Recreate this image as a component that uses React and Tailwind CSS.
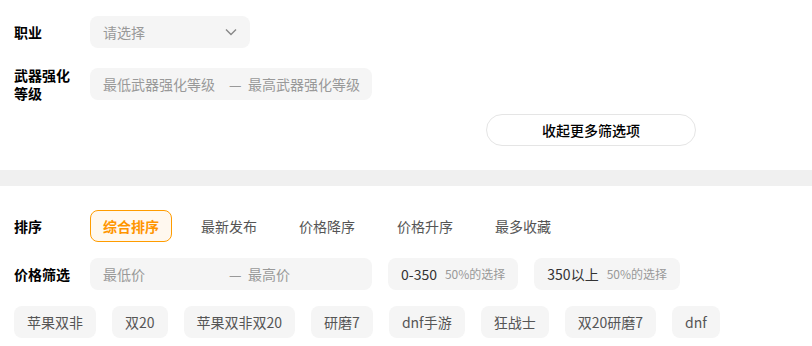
import React, { useState } from 'react';

const sortOptions = ['综合排序', '最新发布', '价格降序', '价格升序', '最多收藏'];
const priceChips = [
  { range: '0-350', hint: '50%的选择' },
  { range: '350以上', hint: '50%的选择' },
];
const tags = ['苹果双非', '双20', '苹果双非双20', '研磨7', 'dnf手游', '狂战士', '双20研磨7', 'dnf'];

const Label = ({ children }) => (
  <div className="w-[60px] mr-4 shrink-0 text-sm font-bold leading-[18px] text-black">{children}</div>
);

const RangeInput = ({ low, high }) => (
  <div className="flex h-8 w-[282px] items-center rounded-lg bg-[#f5f5f5] pl-[13px] text-sm text-[#999]">
    <span className="w-[126px]">{low}</span>
    <span className="w-[19px] text-[#999]">—</span>
    <span>{high}</span>
  </div>
);

const App = () => {
  const [sort, setSort] = useState(0);

  return (
    <div
      className="min-h-screen bg-white"
      style={{ fontFamily: '"Noto Sans CJK SC", "Noto Sans", sans-serif' }}
    >
      {/* More filters */}
      <div className="px-[14px] pt-4 pb-6">
        <div className="flex items-center">
          <Label>职业</Label>
          <div className="flex h-8 w-40 items-center justify-between rounded-lg bg-[#f5f5f5] pl-[13px] pr-[13px] text-sm text-[#999]">
            <span>请选择</span>
            <svg width="12" height="8" viewBox="0 0 12 8" fill="none">
              <path d="M1 1.5L6 6.5L11 1.5" stroke="#888" strokeWidth="1.4" />
            </svg>
          </div>
        </div>

        <div className="mt-[18px] flex items-center">
          <Label>武器强化等级</Label>
          <RangeInput low="最低武器强化等级" high="最高武器强化等级" />
        </div>

        <div className="mt-3 flex">
          <button className="ml-[472px] h-8 w-[210px] rounded-full border border-[#e5e5e5] bg-white text-sm font-medium text-black">
            收起更多筛选项
          </button>
        </div>
      </div>

      <div className="h-4 bg-[#f0f0f0]" />

      {/* Sort & price */}
      <div className="px-[14px] pt-6">
        <div className="flex items-center">
          <Label>排序</Label>
          <div className="flex gap-4">
            {sortOptions.map((opt, i) => (
              <button
                key={opt}
                onClick={() => setSort(i)}
                className={
                  i === sort
                    ? 'h-8 w-[82px] rounded-lg border border-[#ff9c00] bg-[#fff8ef] text-sm font-bold text-[#ff9500]'
                    : 'h-8 w-[82px] rounded-lg border border-transparent text-sm text-[#555]'
                }
              >
                {opt}
              </button>
            ))}
          </div>
        </div>

        <div className="mt-4 flex items-center">
          <Label>价格筛选</Label>
          <RangeInput low="最低价" high="最高价" />
          <div className="ml-4 flex gap-4">
            {priceChips.map((c) => (
              <div key={c.range} className="flex h-8 items-center rounded-lg bg-[#f5f5f5] px-[13px]">
                <span className="text-sm text-[#333]">{c.range}</span>
                <span className="ml-2 text-xs text-[#999]">{c.hint}</span>
              </div>
            ))}
          </div>
        </div>

        <div className="mt-4 flex gap-4">
          {tags.map((t) => (
            <div key={t} className="flex h-8 items-center rounded-lg bg-[#f5f5f5] px-[13px] text-sm text-[#555]">
              {t}
            </div>
          ))}
        </div>
      </div>
    </div>
  );
};

export default App;
